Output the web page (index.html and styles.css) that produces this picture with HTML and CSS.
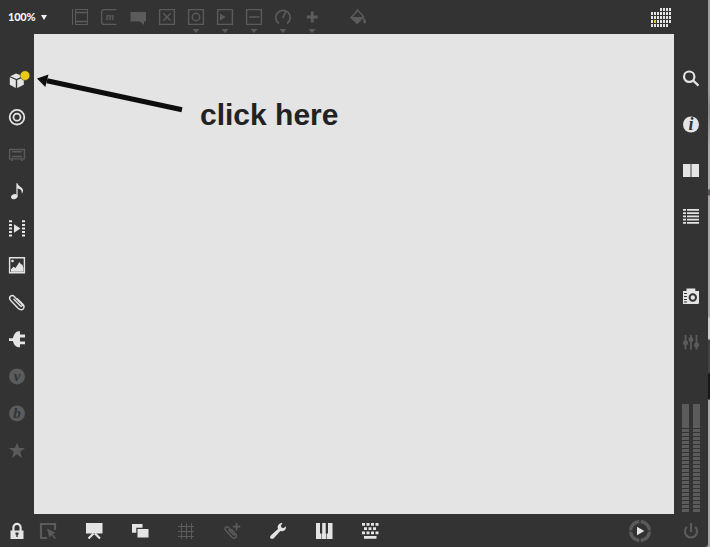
FILE: index.html
```html
<!DOCTYPE html>
<html lang="en">
<head>
<meta charset="utf-8">
<title>Patcher</title>
<link rel="stylesheet" href="styles.css">
</head>
<body>
<div class="window">
  <header class="topbar">
    <div class="zoom"><span>100%</span><svg class="caret-light" viewBox="0 0 6 5"><path d="M0 0h6L3 5z"/></svg></div>
    <nav class="objects">
      <div class="tool"><svg viewBox="0 0 16 16"><path class="line thin" d="M.5 0v16M3.500 0v16M15.500 0v16M3 .5h13M3 15.500h13"/><path class="line" d="M3 3.500h12.500M3 12.500h12.500"/></svg></div>
      <div class="tool"><svg viewBox="0 0 16 16"><path class="line" d="M15.500 .6H3Q.6 .6 .6 3v10q0 2.400 2.400 2.400h12.500"/><text class="serif letter-m" x="9" y="11">m</text></svg></div>
      <div class="tool"><svg viewBox="0 0 16 16"><path d="M.5 3H16v9.500h-2V16l-4-3.500H.5z"/></svg></div>
      <div class="tool"><svg viewBox="0 0 16 16"><path class="line" d="M.6 .6h14.800v14.800H.6zM4.300 4.300l7.400 7.400M11.700 4.300l-7.400 7.400"/></svg></div>
      <div class="tool"><svg viewBox="0 0 16 16"><path class="line" d="M.6 .6h14.800v14.800H.6z"/><circle class="line" cx="8" cy="8" r="3.700"/></svg><i class="caret"></i></div>
      <div class="tool"><svg viewBox="0 0 16 16"><path class="line" d="M.6 .6h14.800v14.800H.6z"/><path d="M3 4.500L8.500 8 3 11.500z"/></svg><i class="caret"></i></div>
      <div class="tool"><svg viewBox="0 0 16 16"><path class="line" d="M.6 .6h14.800v14.800H.6zM3 8h10.500"/></svg><i class="caret"></i></div>
      <div class="tool"><svg viewBox="0 0 16 16"><path class="line bold" d="M4 14.500A7.200 7.200 0 1 1 12 14.500"/><path class="line bold" d="M7.800 9L10.500 3"/></svg><i class="caret"></i></div>
      <div class="tool"><svg viewBox="0 0 16 16"><path d="M6.800 2.500h2.900v4h4v3h-4v4H6.800v-4h-4v-3h4z"/></svg><i class="caret"></i></div>
      <div class="tool fill"><svg viewBox="0 0 16 16"><path class="line" d="M5.500 3.500L7.500 1l6 6.500L7 14 1 8.500l6-6"/><path d="M.5 8h13.500L7 15.500zM13.500 8.500c2 2 2.500 3 2.500 4.200 0 2-2.800 2-2.800 0z"/></svg></div>
    </nav>
    <svg class="calendar" viewBox="0 0 20 19"><path d="M9 0h2v3H9zM12 0h2v3h-2zM15 0h2v3h-2zM18 0h2v3h-2z"/><path id="row" d="M0 4h2v3H0zM3 4h2v3H3zM6 4h2v3H6zM9 4h2v3H9zM12 4h2v3h-2zM15 4h2v3h-2zM18 4h2v3h-2z"/><use href="#row" y="4"/><use href="#row" y="8"/><path d="M0 16h2v3H0zM3 16h2v3H3zM6 16h2v3H6zM9 16h2v3H9zM12 16h2v3h-2zM15 16h2v3h-2z"/><path class="yellow" d="M3 12h2v3H3z"/></svg>
  </header>

  <aside class="left">
    <svg viewBox="0 0 16 16"><path d="M1.200 4.200L7 1.500l7 2.600-6.500 3zM.8 5.300l6 2.800V16l-6-3.200zM8.200 8.100l6.600-2.800v7.500L8.200 16z"/><circle class="yellow ringed" cx="16" cy="3.600" r="4.800"/></svg>
    <svg viewBox="0 0 16 16"><circle class="line bold" cx="8" cy="8.200" r="7.300"/><circle class="line bold" cx="8" cy="8.200" r="3.500"/></svg>
    <svg class="dim" viewBox="0 0 16 16"><path class="line" d="M.6 3.500h14.800v9.400H.6zM3 5.700h10M3 10.500h10M2.500 3.500v-1M13.500 3.500v-1M3 13v2M13 13v2"/></svg>
    <svg viewBox="0 0 16 16"><ellipse cx="5.300" cy="13.600" rx="3.300" ry="2.500" transform="rotate(-20 5.300 13.600)"/><path d="M7.400 .3h1.200c.3 3.500 5.200 3.500 5.400 7 .1 1.500-.4 2.500-1.200 3.400.5-3.100-1.300-4.700-4.200-5.200v8H7.400z"/></svg>
    <svg viewBox="0 0 16 16"><path d="M0 .3h3v2H0zM0 4h3v2H0zM0 7.500h3v2H0zM0 11h3v2H0zM0 14.500h3v2H0zM13 .3h3v2h-3zM13 4h3v2h-3zM13 7.500h3v2h-3zM13 11h3v2h-3zM13 14.500h3v2h-3zM5 4.300l6.500 4.200L5 12.700z"/></svg>
    <svg viewBox="0 0 16 16"><path class="line" d="M.6 .8h14.800v15H.6z"/><circle cx="3.500" cy="4" r="1.300"/><path d="M2 14.700v-2.500l2.500-2.400 2 1.200L10.500 5l1.700 2.700.8-.7 1.500 4v3.700z"/></svg>
    <svg viewBox="0 0 16 16"><path class="line" d="M4.500 4.700l6.800 7.100c1.300 1.400 2.800-.2 1.500-1.500L5.500 2.800C2.600-.1-1 3.300 1.500 6.200l7.600 8c3.900 3.700 8-.4 4.500-4.100L8 4.400"/></svg>
    <svg viewBox="0 0 16 16"><path d="M0 7.200h3.800Q5.500 .8 9.500 .3H11v3.300h5v2.900h-5v4h5v2.800h-5v3H9.500Q5.500 15.600 3.800 9.900H0z"/></svg>
    <svg class="dim" viewBox="0 0 16 16"><circle cx="8" cy="8.400" r="8"/><text class="serif cut" x="8" y="12.500">v</text></svg>
    <svg class="dim" viewBox="0 0 16 16"><circle cx="8" cy="8.400" r="8"/><text class="serif cut" x="8" y="13.400">b</text></svg>
    <svg class="dim" viewBox="0 0 16 16"><path d="M8 .4l2 5.700h6l-4.800 3.700L13 15.900l-5-3.700-5 3.700 1.800-6.100L0 6.100h6z"/></svg>
  </aside>

  <main class="canvas">
    <svg class="arrow" viewBox="0 0 150 50"><path class="shaft" d="M13 6.800L148 35.800"/><path d="M3 4.400L14.500 .5 11.300 13z"/></svg>
    <div class="note">click here</div>
  </main>

  <aside class="right">
    <svg viewBox="0 0 16 16"><circle class="line heavy" cx="6.200" cy="6.700" r="5.200"/><path class="line heavy" d="M10 10.400l5.500 5.200"/></svg>
    <svg viewBox="0 0 16 16"><circle cx="8" cy="8.500" r="8"/><text class="serif cut info" x="8" y="14">i</text></svg>
    <svg viewBox="0 0 16 16"><path d="M0 2h7.300v13H0zM8.700 2H16v13H8.700z"/><path class="shade" d="M7.300 2h1.400v13H7.300z"/></svg>
    <svg viewBox="0 0 16 16"><path d="M0 1h3v1.800H0zM0 4.200h3V6H0zM0 7.500h3v1.800H0zM0 10.800h3v1.800H0zM0 14h3v1.800H0zM4 1h12v1.800H4zM4 4.200h12V6H4zM4 7.500h12v1.800H4zM4 10.800h12v1.800H4zM4 14h12v1.800H4z"/></svg>
    <svg class="camera" viewBox="0 0 16 16"><path d="M0 3h3.500V.5h8.800V3H16v12.300L15 16H0z"/><circle class="hole" cx="9.800" cy="9.500" r="3.200"/><path class="hole-line" d="M1 5.500h3M1 8.500h3M1 11.500h3M1 14h3"/></svg>
    <svg class="dim" viewBox="0 0 16 16"><path class="line bold" d="M2.500 1v14.500M8 1v14.500M13.500 1v14.500"/><circle cx="2.500" cy="8.700" r="2.500"/><circle cx="8" cy="5.400" r="2.500"/><circle cx="13.500" cy="11" r="2.500"/></svg>
    <div class="meters"><div class="meter"></div><div class="meter"></div></div>
  </aside>

  <footer class="bottombar">
    <svg class="lock" viewBox="0 0 14 16"><path d="M.5 7.500h13V16H.5z"/><path class="line heavy" d="M3.400 8V4.500a3.600 3.600 0 0 1 7.200 0V8"/><path class="cutout" d="M5.500 9.500h3v2.200h-.8V14H6.300v-2.300h-.8z"/></svg>
    <nav class="commands">
      <svg class="dim" viewBox="0 0 16 16"><path class="line heavy" d="M7 15H1V1h14v6"/><path d="M7 5.500l8.500 4.200-3 1.200 3.500 4.200-1.300 1-3.500-4.200-1.800 2.800z"/></svg>
      <svg viewBox="0 0 16 16"><path d="M0 0h16.500v10.500H0z"/><path class="line heavy" d="M7.500 10.500l-5 5M9 10.500l5 5"/></svg>
      <svg viewBox="0 0 16 16"><path d="M0 1h10.500v3.800H4.300v5H0zM5.500 6h11v8.500h-11z"/></svg>
      <svg class="dim" viewBox="0 0 16 16"><path class="line thin" d="M3.500 0v16M8.500 0v16M13.500 0v16M0 3.500h16M0 8.500h16M0 13.500h16"/></svg>
      <svg class="dim" viewBox="0 0 16 16"><path class="line" d="M4.500 6.500l4.800 5c1.300 1.300 2.500 0 1.200-1.300L5 4.700c-2.500-2.400-5.400.5-3 3l5.500 6c3.300 3.300 6.800-.2 3.700-3.300L7.500 6.500"/><path d="M11.700 0h1.700v2.800h2.900v1.700h-2.900v2.900h-1.700V4.500H8.800V2.800h2.900z"/></svg>
      <svg viewBox="0 0 16 16"><path d="M10.500 .2c1-.3 2 0 2 0L10.800 2.500l.8 2.200 2.200.4 2-1.800c.7 2.500-1.100 4.900-3.700 4.900-.8 0-1.300-.1-1.800-.3L4 14.900C2.800 16.200.9 16.100.3 15c-.6-1 0-2.200 1-3L8 6c-1-2.400.2-4.900 2.500-5.800z"/></svg>
      <svg viewBox="0 0 16 16"><path d="M0 0h4v10.500h1.200V16H0zM6.200 0h3.500v10.500h.7V16H5.700v-5.500h.5zM12 0h4.500v16H11v-5.500h1z"/></svg>
      <svg viewBox="0 0 16 16"><path d="M0 0h3v2.700H0zM4.500 0h3v2.700h-3zM9 0h3v2.700H9zM13.500 0h3v2.700h-3zM2 4.200h3v2.700H2zM6.500 4.200h3v2.700h-3zM11 4.200h3v2.700h-3zM0 8.500h3v2.700H0zM4.500 8.500h3v2.700h-3zM9 8.500h3v2.700H9zM13.500 8.500h3v2.700h-3zM2 13h12.500v2.700H2z"/></svg>
    </nav>
    <svg class="play" viewBox="0 0 24 24"><path class="ring" d="M12.700 2.500A9.500 9.500 0 0 1 21.500 11.300M21.500 12.700A9.500 9.500 0 0 1 12.700 21.500M11.300 21.500A9.500 9.500 0 0 1 2.500 12.700M2.500 11.300A9.500 9.500 0 0 1 11.300 2.500"/><path d="M9 7.700l7.300 4.300L9 16.300z"/></svg>
    <svg class="dim power" viewBox="0 0 16 16"><path class="line heavy" d="M4 3.800a6.100 6.100 0 1 0 8 0M8 0v9"/></svg>
  </footer>
</div>
</body>
</html>
```
FILE: styles.css
```css
* { box-sizing: border-box; }
body {
  margin: 0;
  width: 710px;
  height: 547px;
  overflow: hidden;
  font-family: "Liberation Sans", Arial, sans-serif;
  background: linear-gradient(#a0a0a0 0 90px, #8b8b8b 110px, #aaa 146px 189px, #66504c 190px 195px, #a9a9a9 196px 317px, #d0d0d0 318px 339px, #424242 340px 373px, #171717 374px 399px, #a6a6a6 400px 547px);
}
.window {
  width: 708px;
  height: 547px;
  display: grid;
  grid-template: 34px 480px 33px / 34px 640px 34px;
  background: #333;
  border-bottom-right-radius: 3px;
}
svg { display: block; width: 16px; height: 16px; flex: none; overflow: visible; fill: #e4e4e4; stroke: none; }
.line { fill: none; stroke: #e4e4e4; stroke-width: 1.4; }
.thin { stroke-width: 1; }
.bold { stroke-width: 1.8; }
.heavy { stroke-width: 2.2; }
.dim, .objects svg { fill: #5b5b5b; }
.dim .line, .objects .line { stroke: #5b5b5b; }
.yellow { fill: #ebcb18; }
.ringed { stroke: #333; stroke-width: .5; }
.shade { fill: #aaa; }
.cutout { fill: #333; }
.hole { fill: none; stroke: #333; stroke-width: 2; }
.hole-line { stroke: #333; stroke-width: 1.2; }
.serif { font: italic bold 15px "Liberation Serif", serif; text-anchor: middle; }
.cut { fill: #333; }
.info { font-size: 18px; }
.letter-m { font-size: 11px; }

.topbar { grid-column: 1 / -1; display: flex; padding: 0 37px 0 8px; }
.zoom {
  width: 57.5px;
  height: 34px;
  display: flex;
  align-items: center;
  gap: 6px;
  font: 900 11px/34px Lato, sans-serif;
  letter-spacing: -.2px;
  color: #f2f2f2;
}
.caret-light { width: 6px; height: 5px; fill: #f2f2f2; }
.objects { display: flex; }
.tool { width: 29px; height: 34px; padding-top: 9px; display: flex; flex-direction: column; align-items: center; gap: 4px; }
.fill { margin-left: 17px; }
.caret { width: 7px; height: 4px; background: #5b5b5b; clip-path: polygon(0 0, 100% 0, 50% 100%); }
.calendar { width: 20px; height: 19px; margin: 8px 0 0 auto; }

.left, .right { display: flex; flex-direction: column; align-items: center; }
.left { padding-top: 38px; gap: 21px; }
.right { padding-top: 36px; gap: 30px; }
.camera { margin-top: 34px; }
.meters { display: flex; gap: 4px; margin-top: 24px; }
.right .meters { margin-top: 24px; }
.meter {
  width: 7px;
  height: 108px;
  background: linear-gradient(#5b5b5b 0 0) 0 0 / 100% 24px no-repeat, repeating-linear-gradient(#333 0 1px, #5b5b5b 1px 4px);
}

.canvas { background: #e4e4e4; display: flex; align-items: flex-start; }
.arrow { width: 150px; height: 50px; margin-top: 40px; fill: #0d0d0d; }
.shaft { stroke: #0d0d0d; stroke-width: 5; fill: none; }
.note { margin: 64px 0 0 16px; font-weight: bold; font-size: 30px; line-height: 34px; color: #222; }

.bottombar { grid-column: 1 / -1; display: flex; align-items: center; padding: 0 9px 0 10px; }
.lock { width: 14px; }
.commands { display: flex; gap: 30px; margin-left: 16px; }
.play { width: 24px; height: 24px; margin-left: auto; }
.ring { fill: none; stroke: #5b5b5b; stroke-width: 3.3; }
.power { margin-left: 31px; }
```
